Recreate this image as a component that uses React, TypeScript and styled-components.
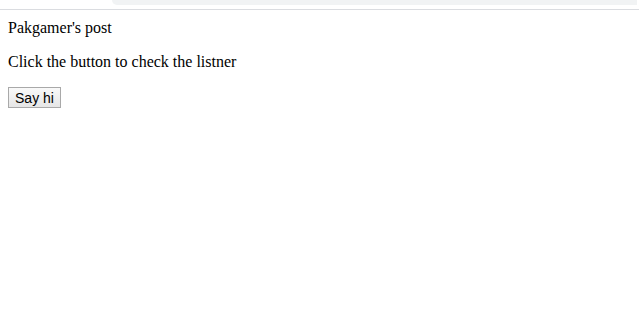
import {FC} from 'react';
import styled, {createGlobalStyle} from 'styled-components';

const Global = createGlobalStyle`
  html, body {
    margin: 0;
    background: #ffffff;
  }
`;

const App: FC = () => {
  const sayHi = () => alert('hi');
  return (
    <>
      <Global />
      <Chrome>
        <Spacer />
        <Omnibox />
      </Chrome>
      <Page>
        <Heading>Pakgamer's post</Heading>
        <Text>Click the button to check the listner</Text>
        <Button onClick={sayHi}>Say hi</Button>
      </Page>
    </>
  );
};

const Chrome = styled.div`
  display: flex;
  height: 9px;
  border-bottom: 1px solid #dadce0;
  background: #ffffff;
`;

const Spacer = styled.div`
  width: 112px;
`;

const Omnibox = styled.div`
  flex: 1;
  height: 5px;
  margin-right: 2px;
  background: #f1f3f4;
  border-bottom-left-radius: 14px;
`;

const Page = styled.div`
  padding: 9px 8px 8px;
  font-family: "Liberation Serif", "Times New Roman", serif;
  font-size: 16px;
  color: #000000;
`;

const Heading = styled.div`
  line-height: normal;
`;

const Text = styled.p`
  margin: 16px 0;
`;

const Button = styled.button`
  font-family: "Liberation Sans", Arial, sans-serif;
  font-size: 14px;
  color: #000000;
  padding: 0 6px;
  border: 1px solid #a9a9a9;
  border-radius: 0;
  background: linear-gradient(#f9f9f9, #e6e6e6);
  height: 21px;
  width: 53px;
`;

export default App;
